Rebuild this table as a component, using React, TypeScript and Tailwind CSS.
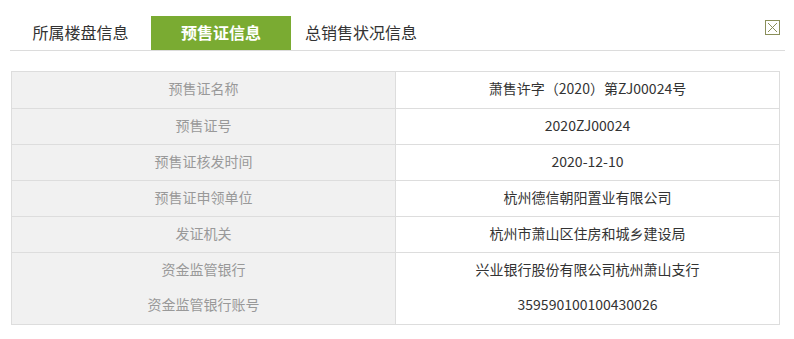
import React from "react";

const rows: [string, string][] = [
  ["预售证名称", "萧售许字（2020）第ZJ00024号"],
  ["预售证号", "2020ZJ00024"],
  ["预售证核发时间", "2020-12-10"],
  ["预售证申领单位", "杭州德信朝阳置业有限公司"],
  ["发证机关", "杭州市萧山区住房和城乡建设局"],
  ["资金监管银行", "兴业银行股份有限公司杭州萧山支行"],
  ["资金监管银行账号", "359590100100430026"],
];

export default function App() {
  return (
    <div
      className="w-[794px] h-[339px] bg-white relative"
      style={{ fontFamily: '"Noto Sans CJK SC", "Noto Sans", sans-serif' }}
    >
      <div className="pt-[16px] pl-[10px] pr-[9px]">
        <div className="flex h-[35px] border-b border-[#dcdcdc] text-[16px] leading-[33px] text-[#333]">
          <div className="w-[141px] text-center">所属楼盘信息</div>
          <div className="w-[140px] text-center bg-[#7aab32] text-white font-bold">预售证信息</div>
          <div className="w-[140px] text-center">总销售状况信息</div>
        </div>
      </div>
      <div className="absolute left-[765px] top-[20px] w-[15px] h-[15px] border border-[#8a8f5a] flex items-center justify-center">
        <svg width="11" height="11" viewBox="0 0 11 11">
          <path d="M1 1 L10 10 M10 1 L1 10" stroke="#8a8f5a" strokeWidth="1" fill="none" />
        </svg>
      </div>
      <div className="pt-[20px] pl-[11px] pr-[14px]">
        <div className="border border-[#dddddd] text-[14px]">
          {rows.map(([k, v], i) => (
            <div
              key={k}
              className={`flex h-[36px] ${i > 0 && i !== 6 ? "border-t border-[#dddddd]" : ""}`}
            >
              <div className="w-[384px] bg-[#f1f1f1] text-[#999] flex items-center justify-center pb-[3px] border-r border-[#dddddd]">
                {k}
              </div>
              <div className="flex-1 text-[#333] flex items-center justify-center pb-[3px]">{v}</div>
            </div>
          ))}
        </div>
      </div>
    </div>
  );
}
